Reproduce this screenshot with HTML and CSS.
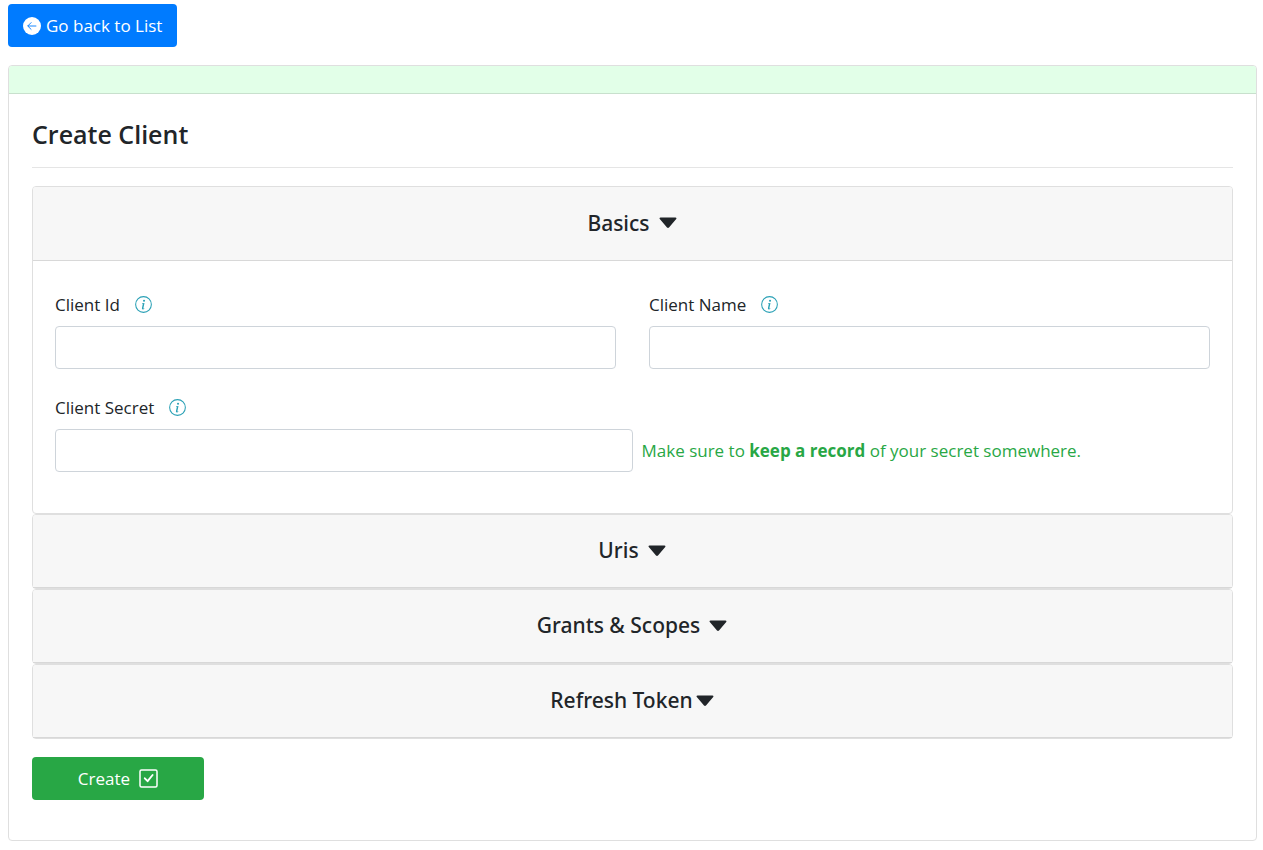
FILE: index.html
```html
<!DOCTYPE html>
<html lang="en">
<head>
<meta charset="utf-8">
<title>Create Client</title>
<link rel="stylesheet" href="styles.css">
</head>
<body>
<a class="btn btn-primary" href="#">
  <svg class="icon" viewBox="0 0 16 16" aria-hidden="true"><circle cx="8" cy="8" r="8" fill="#fff"/><path d="M11.5 8h-7M7.2 5L4.2 8l3 3" fill="none" stroke="#007bff" stroke-width="0.8" stroke-linecap="round" stroke-linejoin="round"/></svg>
  <span>Go back to List</span>
</a>
<main class="card">
  <div class="card-strip"></div>
  <form class="card-content">
    <h1 class="title">Create Client</h1>
    <section class="panel">
      <h2 class="panel-heading"><button class="panel-toggle spaced open" type="button" aria-expanded="true">Basics
        <svg class="caret" viewBox="0 0 18 12" aria-hidden="true"><path d="M1.5 0.5h15c.9 0 1.3 1 .7 1.6l-7.2 8.5c-.5.6-1.5.6-2 0L.8 2.1C.2 1.500.6.5 1.500.5z"/></svg></button></h2>
      <div class="panel-body">
        <div class="fields">
          <div class="field">
            <div class="label-row"><label for="client-id">Client Id</label>
              <svg class="info" viewBox="0 0 16 16" aria-hidden="true"><circle cx="8" cy="8" r="7.400"/><path class="info-mark" d="M8.930 6.588l-2.290.287-.082.380.450.083c.294.070.352.176.288.469l-.738 3.468c-.194.897.105 1.319.808 1.319.545 0 1.178-.252 1.465-.598l.088-.416c-.200.176-.492.246-.686.246-.275 0-.375-.193-.304-.533L8.930 6.588z"/><circle class="info-mark" cx="8.500" cy="4.500" r="1"/></svg></div>
            <input class="input" id="client-id" type="text">
          </div>
          <div class="field">
            <div class="label-row"><label for="client-name">Client Name</label>
              <svg class="info" viewBox="0 0 16 16" aria-hidden="true"><circle cx="8" cy="8" r="7.400"/><path class="info-mark" d="M8.930 6.588l-2.290.287-.082.380.450.083c.294.070.352.176.288.469l-.738 3.468c-.194.897.105 1.319.808 1.319.545 0 1.178-.252 1.465-.598l.088-.416c-.200.176-.492.246-.686.246-.275 0-.375-.193-.304-.533L8.930 6.588z"/><circle class="info-mark" cx="8.500" cy="4.500" r="1"/></svg></div>
            <input class="input" id="client-name" type="text">
          </div>
        </div>
        <div class="field">
          <div class="label-row"><label for="client-secret">Client Secret</label>
            <svg class="info" viewBox="0 0 16 16" aria-hidden="true"><circle cx="8" cy="8" r="7.400"/><path class="info-mark" d="M8.930 6.588l-2.290.287-.082.380.450.083c.294.070.352.176.288.469l-.738 3.468c-.194.897.105 1.319.808 1.319.545 0 1.178-.252 1.465-.598l.088-.416c-.200.176-.492.246-.686.246-.275 0-.375-.193-.304-.533L8.930 6.588z"/><circle class="info-mark" cx="8.500" cy="4.500" r="1"/></svg></div>
          <div class="secret-row">
            <input class="input input-half" id="client-secret" type="text">
            <span class="hint">Make sure to <strong>keep a record</strong> of your secret somewhere.</span>
          </div>
        </div>
      </div>
    </section>
    <section class="panel">
      <h2 class="panel-heading"><button class="panel-toggle spaced" type="button" aria-expanded="false">Uris
        <svg class="caret" viewBox="0 0 18 12" aria-hidden="true"><path d="M1.5 0.5h15c.9 0 1.3 1 .7 1.6l-7.2 8.5c-.5.6-1.5.6-2 0L.8 2.1C.2 1.500.6.5 1.500.5z"/></svg></button></h2>
    </section>
    <section class="panel">
      <h2 class="panel-heading"><button class="panel-toggle spaced" type="button" aria-expanded="false">Grants &amp; Scopes
        <svg class="caret" viewBox="0 0 18 12" aria-hidden="true"><path d="M1.5 0.5h15c.9 0 1.3 1 .7 1.6l-7.2 8.5c-.5.6-1.5.6-2 0L.8 2.1C.2 1.500.6.5 1.500.5z"/></svg></button></h2>
    </section>
    <section class="panel">
      <h2 class="panel-heading"><button class="panel-toggle" type="button" aria-expanded="false">Refresh Token
        <svg class="caret" viewBox="0 0 18 12" aria-hidden="true"><path d="M1.5 0.5h15c.9 0 1.3 1 .7 1.6l-7.2 8.5c-.5.6-1.5.6-2 0L.8 2.1C.2 1.500.6.5 1.500.5z"/></svg></button></h2>
    </section>
    <button class="btn btn-success" type="submit">
      <span>Create</span>
      <svg class="icon check" viewBox="0 0 19 19" aria-hidden="true"><rect x="1" y="1" width="17" height="17" rx="1.500" fill="none" stroke="#fff" stroke-width="1.500"/><path d="M5.800 9.300l2.800 2.900 5-6.200" fill="none" stroke="#fff" stroke-width="1.900" stroke-linecap="round" stroke-linejoin="round"/></svg>
    </button>
  </form>
</main>
</body>
</html>
```
FILE: styles.css
```css
* { box-sizing: border-box; }
body {
  margin: 0;
  padding: 4px 6px 8px 8px;
  font-family: "Open Sans", "Noto Sans", sans-serif;
  font-size: 17px;
  line-height: 27px;
  color: #212529;
  background: #fff;
}
.btn {
  display: inline-flex;
  align-items: center;
  justify-content: center;
  height: 43px;
  padding: 0 15px;
  border: 0;
  border-radius: 4px;
  color: #fff;
  font: inherit;
  text-decoration: none;
}
.btn-primary { gap: 5px; background: #007bff; }
.btn-success { gap: 9px; width: 172px; margin-top: 18px; background: #28a745; }
.icon { flex: none; width: 18px; height: 18px; }
.check { width: 19px; height: 19px; }
.card {
  margin-top: 18px;
  border: 1px solid #dfdfdf;
  border-radius: 4px;
}
.card-strip {
  height: 28px;
  border-bottom: 1px solid #c8e0cd;
  border-radius: 3px 3px 0 0;
  background: #e2ffe8;
}
.card-content { padding: 23px 23px 40px; }
.title {
  margin: 0 0 18px;
  padding-bottom: 16px;
  border-bottom: 1px solid #e5e5e5;
  font-size: 25px;
  line-height: 34px;
  font-weight: 600;
}
.panel {
  border: 1px solid #dfdfdf;
  border-radius: 4px;
}
.panel-heading {
  margin: 0;
  border-bottom: 1px solid #d8d8d8;
}
.panel-toggle {
  display: flex;
  align-items: center;
  justify-content: center;
  gap: 3px;
  width: 100%;
  height: 72px;
  padding: 0 1px 1px 0;
  border: 0;
  border-radius: 3px 3px 0 0;
  background: #f7f7f7;
  color: inherit;
  font: 500 21px/27px "Noto Sans", "Open Sans", sans-serif;
}
.spaced { gap: 9px; }
.open { height: 73px; }
.caret { width: 18px; height: 12px; fill: #212529; }
.panel-body { padding: 30px 22px 41px; }
.fields {
  display: grid;
  grid-template-columns: 1fr 1fr;
  gap: 33px;
  margin-bottom: 25px;
}
.label-row {
  display: flex;
  align-items: center;
  gap: 15px;
  margin-bottom: 8px;
}
.info { width: 17px; height: 17px; fill: none; stroke: #2ba1b6; }
.info .info-mark { fill: #2ba1b6; stroke: none; }
.input {
  display: block;
  width: 100%;
  height: 43px;
  padding: 6px 13px;
  border: 1px solid #ced4da;
  border-radius: 4px;
  background: #fff;
  font: inherit;
}
.secret-row { display: flex; align-items: center; gap: 9px; }
.input-half { width: 50%; }
.hint { color: #28a745; }
```
